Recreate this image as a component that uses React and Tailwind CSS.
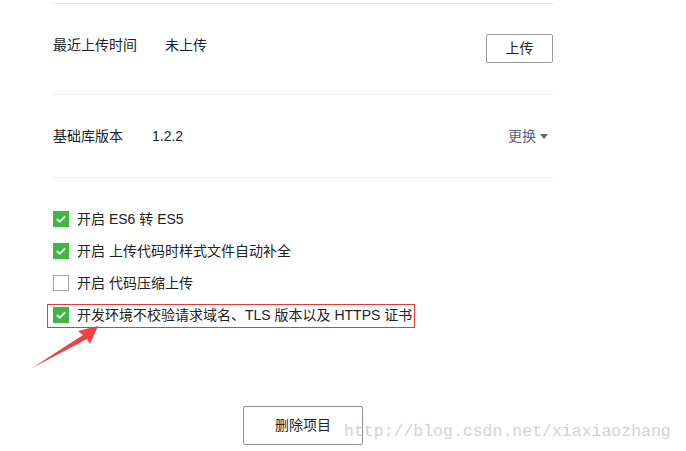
import React from "react";

const font = { fontFamily: '"Liberation Sans", "Noto Sans CJK SC", sans-serif' };

function Check({ checked }) {
  if (checked) {
    return (
      <div className="w-[16px] h-[16px] bg-[#43b548] flex items-center justify-center shrink-0">
        <svg width="12" height="12" viewBox="0 0 12 12">
          <path d="M2 6.2 L4.8 8.8 L10 3.4" fill="none" stroke="white" strokeWidth="1.8" />
        </svg>
      </div>
    );
  }
  return <div className="w-[16px] h-[16px] border border-[#a8a8a8] bg-white shrink-0" />;
}

function Row({ checked, children }) {
  return (
    <div className="h-[32px] flex items-center gap-[8px]">
      <Check checked={checked} />
      <span className="text-[14px] leading-[20px] text-[#222]">{children}</span>
    </div>
  );
}

export default function App() {
  return (
    <div className="relative w-[686px] h-[451px] bg-white overflow-hidden" style={font}>
      <div className="ml-[53px] w-[500px] pt-[3px]">
        <div className="h-px bg-[#e8e8e8]" />
        <div className="h-[90px] flex items-start pt-[30px]">
          <span className="mt-[1px] text-[14px] leading-[20px] text-[#222] w-[84px]">最近上传时间</span>
          <span className="mt-[1px] ml-[28px] text-[14px] leading-[20px] text-[#222]">未上传</span>
          <button className="ml-auto w-[67px] h-[29px] border border-[#9a9a9a] rounded-[2px] text-[14px] text-[#222] bg-white flex items-center justify-center">
            上传
          </button>
        </div>
        <div className="h-px bg-[#ececec]" />
        <div className="h-[82px] flex items-start pt-[31px]">
          <span className="text-[14px] leading-[20px] text-[#222] w-[70px]">基础库版本</span>
          <span className="ml-[29px] text-[14px] leading-[20px] text-[#222]">1.2.2</span>
          <span className="ml-auto mr-[5px] flex items-center gap-[4px] text-[14px] leading-[20px] text-[#56627e]">
            更换
            <svg width="8" height="5" viewBox="0 0 8 5">
              <path d="M0 0 L8 0 L4 5 Z" fill="#666" />
            </svg>
          </span>
        </div>
        <div className="h-px bg-[#ececec]" />
        <div className="pt-[25px]">
          <Row checked>开启 ES6 转 ES5</Row>
          <Row checked>开启 上传代码时样式文件自动补全</Row>
          <Row checked={false}>开启 代码压缩上传</Row>
          <Row checked>开发环境不校验请求域名、TLS 版本以及 HTTPS 证书</Row>
        </div>
        <button className="block mx-auto mt-[75px] w-[120px] h-[39px] border border-[#8f8f8f] rounded-[2px] bg-white text-[14px] text-[#222]">
          删除项目
        </button>
      </div>

      <div className="absolute left-[47px] top-[304px] w-[368px] h-[24px] border border-[#e53935] pointer-events-none" />

      <svg className="absolute left-0 top-0 pointer-events-none" width="686" height="451">
        <polygon
          points="98,326 78,331 83,335 32,368 87,339 90,344"
          fill="#f04040"
        />
      </svg>

      <div
        className="absolute left-[344px] top-[421px] text-[16.5px] leading-[22px] text-[#c8c8c8] opacity-80 whitespace-nowrap"
        style={{ fontFamily: '"Liberation Mono", monospace' }}
      >
        http://blog.csdn.net/xiaxiaozhang
      </div>
    </div>
  );
}
